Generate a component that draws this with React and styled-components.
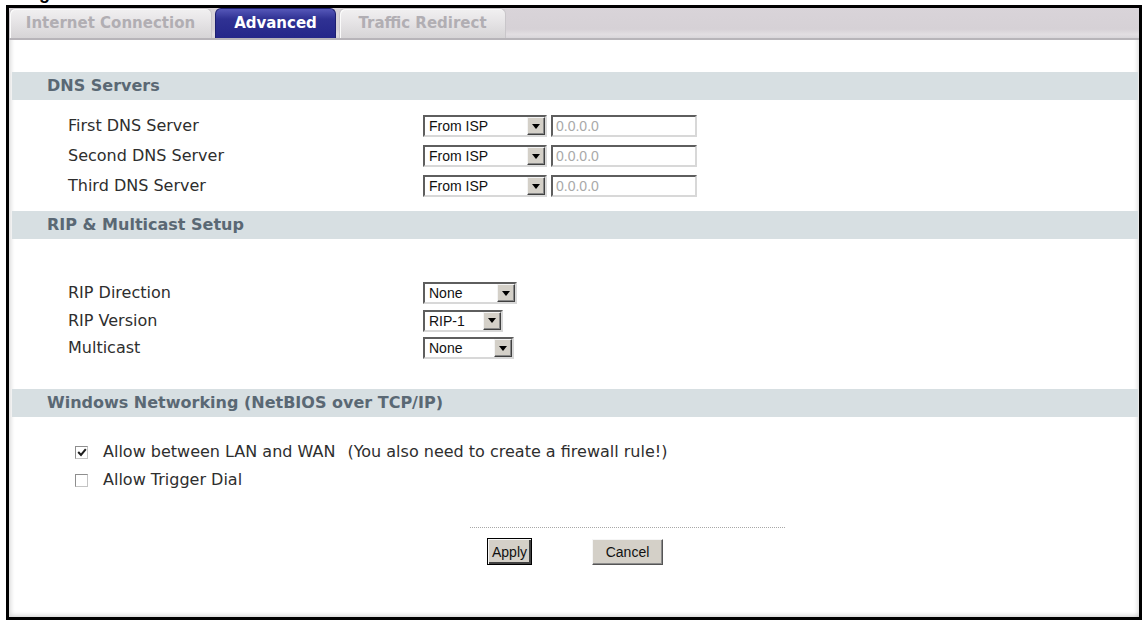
import React from 'react';
import styled, { createGlobalStyle } from 'styled-components';

const GlobalStyle = createGlobalStyle`
  html, body { margin: 0; padding: 0; background: #fff; }
  body {
    width: 1143px;
    height: 623px;
    overflow: hidden;
    font-family: "DejaVu Sans", Verdana, sans-serif;
  }
`;

const Page = styled.div`
  padding: 0 1px 3px 6px;
`;

/* only the descender of the figure caption peeks above the frame */
const Caption = styled.div`
  height: 5px;
  overflow: hidden;
  padding-left: 17px;
  font: bold 18px/18px "Liberation Sans", Arial, sans-serif;
  color: #000;
  span { display: block; margin-top: -16px; }
`;

const Frame = styled.div`
  box-sizing: border-box;
  height: 615px;
  border: 3px solid #000;
  display: flex;
  flex-direction: column;
  background: #fff;
  box-shadow:
    inset 4px -4px 4px -2px rgba(0, 0, 0, 0.14),
    inset -4px 0 4px -2px rgba(0, 0, 0, 0.12);
`;

const TabBar = styled.div`
  height: 30px;
  display: flex;
  gap: 3px;
  background: linear-gradient(#d9d4d9 0%, #d6d1d6 70%, #e2dee2 88%, #d9d6da 100%);
  border-bottom: 2px solid #b7b4b9;
`;

const Tab = styled.div`
  box-sizing: border-box;
  width: ${p => p.$w}px;
  height: 30px;
  display: flex;
  align-items: center;
  justify-content: center;
  border-radius: 6px 6px 0 0;
  font: bold 15px/1 "DejaVu Sans", Verdana, sans-serif;
  color: ${p => (p.$active ? '#fff' : '#b1aeb3')};
  background: ${p =>
    p.$active
      ? 'linear-gradient(#5557b8 0%, #2f3193 35%, #25278a 100%)'
      : 'linear-gradient(#f1f0f1 0%, #e6e4e6 45%, #d6d4d6 100%)'};
  border: 1px solid ${p => (p.$active ? '#1d1f70' : '#c9c6ca')};
  border-bottom: none;
  box-shadow: ${p => (p.$active ? 'none' : 'inset 1px 1px 0 #fbfbfb')};
`;

const Content = styled.div`
  flex: 1;
  padding: 32px 1px 0 3px;
  display: flex;
  flex-direction: column;
`;

const Band = styled.div`
  height: 28px;
  margin-top: ${p => p.$top || 0}px;
  display: flex;
  align-items: center;
  padding-left: 35px;
  background: #d7dfe2;
  font: bold 16px/1 "DejaVu Sans", Verdana, sans-serif;
  color: #5a6874;
`;

const Fields = styled.div`
  display: grid;
  grid-template-columns: 355px auto;
  grid-auto-rows: 22px;
  row-gap: ${p => p.$gap}px;
  align-items: center;
  padding: ${p => p.$top}px 0 0 56px;
`;

const Label = styled.div`
  font: 16px/1 "DejaVu Sans", Verdana, sans-serif;
  color: #2e2e2e;
`;

const Controls = styled.div`
  display: flex;
  gap: 4px;
`;

const SelectBox = styled.div`
  box-sizing: border-box;
  width: ${p => p.$w}px;
  height: 22px;
  display: flex;
  border: 2px solid;
  border-color: #5e5e5e #d8d8d8 #d8d8d8 #5e5e5e;
  background: #fff;
`;

const SelectText = styled.div`
  flex: 1;
  padding-left: 4px;
  font: 14px/18px "Liberation Sans", Arial, sans-serif;
  color: #111;
`;

const ArrowButton = styled.div`
  box-sizing: border-box;
  width: 18px;
  display: flex;
  align-items: center;
  justify-content: center;
  background: #d4d0c8;
  border: 1px solid;
  border-color: #f4f4f4 #404040 #404040 #f4f4f4;
  box-shadow: inset -1px -1px 0 #8a8a8a;
  svg { display: block; }
`;

const TextBox = styled.div`
  box-sizing: border-box;
  width: 146px;
  height: 22px;
  border: 2px solid;
  border-color: #5e5e5e #d8d8d8 #d8d8d8 #5e5e5e;
  padding-left: 3px;
  font: 14px/18px "Liberation Sans", Arial, sans-serif;
  color: #a9a9a9;
`;

const Checks = styled.div`
  display: flex;
  flex-direction: column;
  gap: 8px;
  padding: 25px 0 0 63px;
`;

const CheckRow = styled.label`
  height: 20px;
  display: flex;
  align-items: center;
  font: 16px/1 "DejaVu Sans", Verdana, sans-serif;
  color: #2e2e2e;
`;

const Box = styled.span`
  box-sizing: border-box;
  width: 13px;
  height: 13px;
  margin-right: 15px;
  display: flex;
  align-items: center;
  justify-content: center;
  border: 1px solid #8e8e8e;
  border-right-color: #c4c4c4;
  border-bottom-color: #c4c4c4;
  background: #fff;
`;

const Note = styled.span`
  margin-left: 12px;
`;

const Divider = styled.div`
  width: 315px;
  margin: 37px 0 0 458px;
  border-top: 1px dotted #a8a8a8;
`;

const Buttons = styled.div`
  display: flex;
  justify-content: center;
  align-items: center;
  gap: 60px;
  margin-top: 10px;
`;

const Button = styled.button`
  box-sizing: border-box;
  width: ${p => (p.$primary ? 45 : 71)}px;
  height: ${p => (p.$primary ? 27 : 26)}px;
  padding: 0;
  font: 14px/1 "Liberation Sans", Arial, sans-serif;
  color: #111;
  background: #d4d0c8;
  border: 1px solid;
  border-color: ${p => (p.$primary ? '#000' : '#f6f6f6 #555 #555 #f6f6f6')};
  box-shadow: ${p =>
    p.$primary
      ? 'inset 1px 1px 0 #f6f6f6, inset -2px -2px 0 #404040'
      : 'inset -1px -1px 0 #8c8c8c'};
`;

const Arrow = () => (
  <svg width="8" height="5" viewBox="0 0 8 5">
    <path d="M0 0h8L4 5z" fill="#000" />
  </svg>
);

const Select = ({ value, width }) => (
  <SelectBox $w={width}>
    <SelectText>{value}</SelectText>
    <ArrowButton>
      <Arrow />
    </ArrowButton>
  </SelectBox>
);

const Check = ({ checked }) => (
  <Box>
    {checked && (
      <svg width="10" height="9" viewBox="0 0 10 9">
        <path d="M1.2 4l2.8 3L8.8 1.2" fill="none" stroke="#1e1e1e" strokeWidth="2" />
      </svg>
    )}
  </Box>
);

const dnsRows = ['First DNS Server', 'Second DNS Server', 'Third DNS Server'];

const ripRows = [
  { label: 'RIP Direction', value: 'None', width: 94 },
  { label: 'RIP Version', value: 'RIP-1', width: 80 },
  { label: 'Multicast', value: 'None', width: 91 },
];

export default function App() {
  return (
    <>
      <GlobalStyle />
      <Page>
        <Caption>
          <span>Figure</span>
        </Caption>
        <Frame>
          <TabBar>
            <Tab $w={203}>Internet Connection</Tab>
            <Tab $w={121} $active>Advanced</Tab>
            <Tab $w={167}>Traffic Redirect</Tab>
          </TabBar>
          <Content>
            <Band>DNS Servers</Band>
            <Fields $top={15} $gap={8}>
              {dnsRows.map(label => (
                <React.Fragment key={label}>
                  <Label>{label}</Label>
                  <Controls>
                    <Select value="From ISP" width={124} />
                    <TextBox>0.0.0.0</TextBox>
                  </Controls>
                </React.Fragment>
              ))}
            </Fields>

            <Band $top={14}>RIP &amp; Multicast Setup</Band>
            <Fields $top={43} $gap={5.5}>
              {ripRows.map(r => (
                <React.Fragment key={r.label}>
                  <Label>{r.label}</Label>
                  <Controls>
                    <Select value={r.value} width={r.width} />
                  </Controls>
                </React.Fragment>
              ))}
            </Fields>

            <Band $top={30}>Windows Networking (NetBIOS over TCP/IP)</Band>
            <Checks>
              <CheckRow>
                <Check checked />
                Allow between LAN and WAN
                <Note>(You also need to create a firewall rule!)</Note>
              </CheckRow>
              <CheckRow>
                <Check />
                Allow Trigger Dial
              </CheckRow>
            </Checks>

            <Divider />
            <Buttons>
              <Button $primary>Apply</Button>
              <Button>Cancel</Button>
            </Buttons>
          </Content>
        </Frame>
      </Page>
    </>
  );
}
